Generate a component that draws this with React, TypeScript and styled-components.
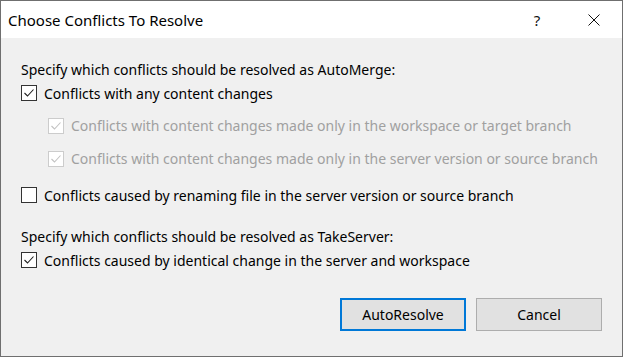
import styled, { createGlobalStyle } from 'styled-components'

const GlobalStyle = createGlobalStyle`
  html, body {
    margin: 0;
    padding: 0;
    background: #f0f0f0;
  }
  * {
    box-sizing: border-box;
  }
`

const FONT = `"Noto Sans", "Open Sans", sans-serif`

type CheckProps = { checked?: boolean; disabled?: boolean }

const CheckBox: React.FC<CheckProps> = ({ checked, disabled }) => (
  <StyledBox $disabled={disabled}>
    {checked && (
      <svg width="14" height="14" viewBox="0 0 14 14">
        <polyline
          points="2.5,7 5.5,10 11.5,3.5"
          fill="none"
          stroke={disabled ? '#c2c2c2' : '#202020'}
          strokeWidth="1.1"
        />
      </svg>
    )}
  </StyledBox>
)

type OptionProps = CheckProps & { label: string; indent?: boolean; tall?: boolean }

const Option: React.FC<OptionProps> = ({ label, checked, disabled, indent, tall }) => (
  <StyledOption $indent={indent} $tall={tall}>
    <CheckBox checked={checked} disabled={disabled} />
    <StyledOptionText $disabled={disabled}>{label}</StyledOptionText>
  </StyledOption>
)

const App: React.FC = () => {
  return (
    <>
      <GlobalStyle />
      <StyledWindow>
        <StyledTitleBar>
          <StyledTitle>Choose Conflicts To Resolve</StyledTitle>
          <StyledTitleButton>?</StyledTitleButton>
          <StyledTitleButton>
            <svg width="12" height="12" viewBox="0 0 12 12">
              <path d="M0.5 0.5 L11.5 11.5 M11.5 0.5 L0.5 11.5" stroke="#111" strokeWidth="1" fill="none" />
            </svg>
          </StyledTitleButton>
        </StyledTitleBar>
        <StyledContent>
          <StyledLabel>Specify which conflicts should be resolved as AutoMerge:</StyledLabel>
          <Option checked label="Conflicts with any content changes" />
          <StyledSubGroup>
            <Option
              indent
              tall
              checked
              disabled
              label="Conflicts with content changes made only in the workspace or target branch"
            />
            <Option
              indent
              tall
              checked
              disabled
              label="Conflicts with content changes made only in the server version or source branch"
            />
          </StyledSubGroup>
          <StyledSpacedRow>
            <Option label="Conflicts caused by renaming file in the server version or source branch" />
          </StyledSpacedRow>
          <StyledSecondLabel>Specify which conflicts should be resolved as TakeServer:</StyledSecondLabel>
          <Option checked label="Conflicts caused by identical change in the server and workspace" />
          <StyledFooter>
            <StyledButton $primary>AutoResolve</StyledButton>
            <StyledButton>Cancel</StyledButton>
          </StyledFooter>
        </StyledContent>
      </StyledWindow>
    </>
  )
}

export default App

const StyledWindow = styled.div`
  border: 1px solid #6f6f6f;
  display: flex;
  flex-direction: column;
  font-family: ${FONT};
  height: 357px;
  width: 623px;
`

const StyledTitleBar = styled.div`
  align-items: center;
  background: #fff;
  display: flex;
  height: 37px;
  padding-left: 7px;
`

const StyledTitle = styled.div`
  color: #000;
  flex: 1;
  font-size: 15px;
`

const StyledTitleButton = styled.div`
  align-items: center;
  color: #111;
  display: flex;
  font-size: 15px;
  height: 37px;
  justify-content: center;
  width: 56px;

  &:last-child {
    width: 57px;
  }
`

const StyledContent = styled.div`
  background: #f0f0f0;
  display: flex;
  flex: 1;
  flex-direction: column;
  padding: 20px 20px 0 20px;
`

const StyledLabel = styled.div`
  align-items: center;
  color: #000;
  display: flex;
  font-size: 14px;
  height: 22px;
`

const StyledSecondLabel = styled(StyledLabel)`
  margin-top: 17px;
`

const StyledOption = styled.div<{ $indent?: boolean; $tall?: boolean }>`
  align-items: center;
  display: flex;
  gap: 7px;
  height: ${p => (p.$tall ? 33 : 26)}px;
  padding-left: ${p => (p.$indent ? 27 : 0)}px;
`

const StyledSubGroup = styled.div`
  display: flex;
  flex-direction: column;
  margin-top: 3px;
`

const StyledSpacedRow = styled.div`
  margin-top: 7px;
`

const StyledBox = styled.div<{ $disabled?: boolean }>`
  align-items: center;
  background: #fff;
  border: 1px solid ${p => (p.$disabled ? '#cccccc' : '#333333')};
  display: flex;
  flex-shrink: 0;
  height: 16px;
  justify-content: center;
  width: 16px;
`

const StyledOptionText = styled.span<{ $disabled?: boolean }>`
  color: ${p => (p.$disabled ? '#a0a0a0' : '#000')};
  font-size: 14px;
  white-space: nowrap;
`

const StyledFooter = styled.div`
  display: flex;
  gap: 10px;
  justify-content: flex-end;
  margin-top: 25px;
`

const StyledButton = styled.button<{ $primary?: boolean }>`
  background: #e1e1e1;
  border: ${p => (p.$primary ? '2px solid #0078d7' : '1px solid #adadad')};
  color: #000;
  font-family: ${FONT};
  font-size: 14px;
  height: 33px;
  padding: 0;
  width: 126px;
`
